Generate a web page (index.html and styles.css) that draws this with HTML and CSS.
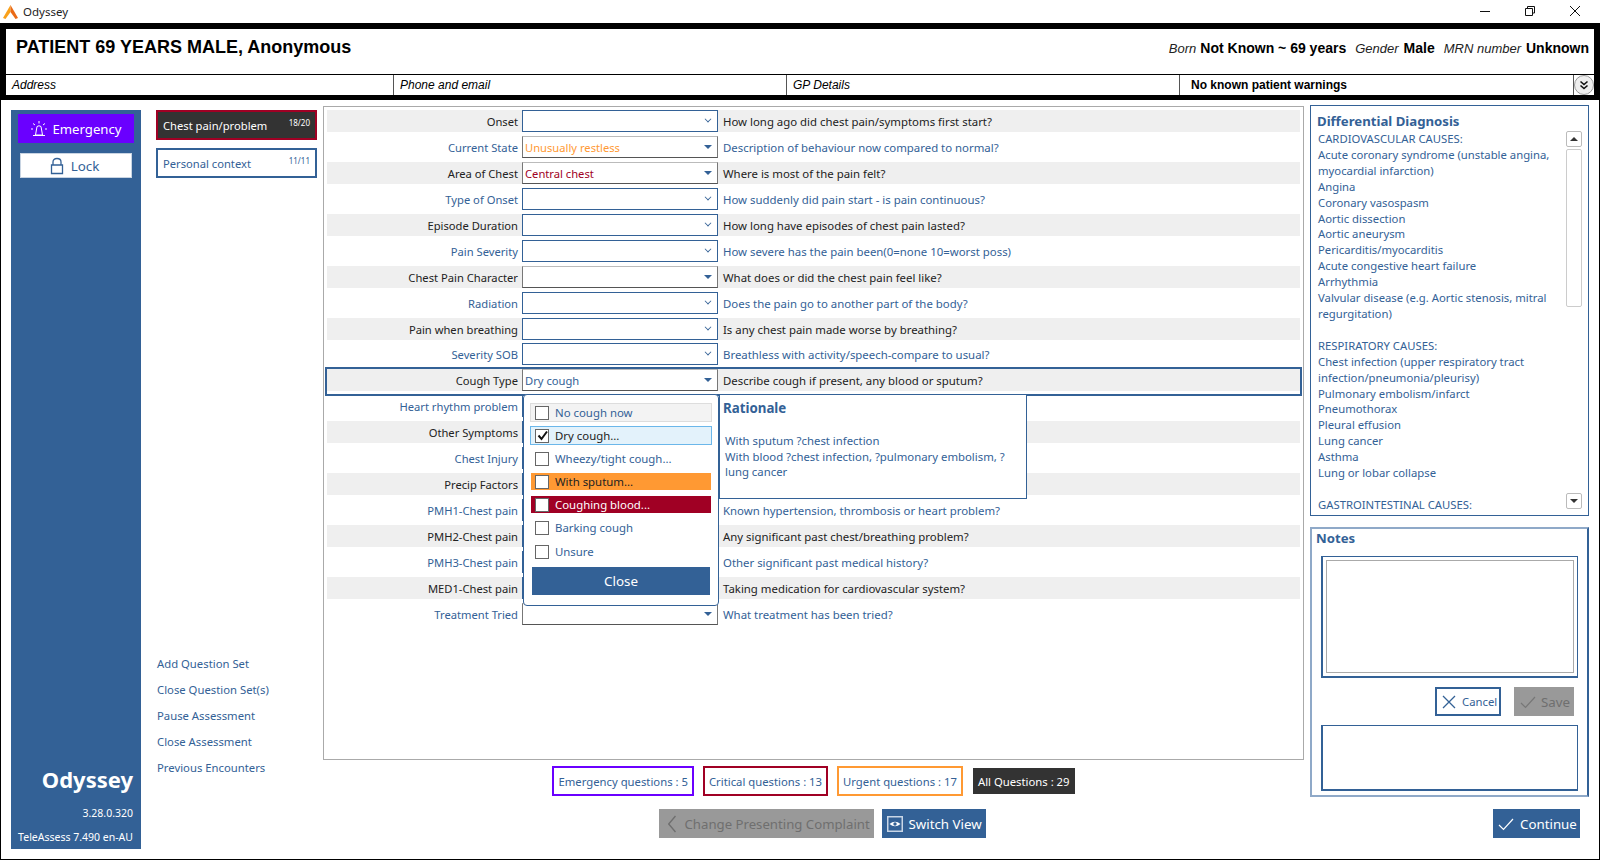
FILE: index.html
```html
<!DOCTYPE html>
<html lang="en">
<head>
<meta charset="utf-8">
<title>Odyssey</title>
<link rel="stylesheet" href="styles.css">
</head>
<body>
<div class="titlebar">
  <svg class="logo" width="15" height="14" viewBox="0 0 15 14"><path d="M7.5 0L0 13L2.5 14L7.5 7Z" fill="#f9a11b"/><path d="M7.5 0L15 13L12.5 14L7.5 7Z" fill="#ea6a17"/></svg>
  <span class="app-name">Odyssey</span>
  <div class="winctl">
    <svg width="12" height="12" viewBox="0 0 12 12"><path d="M1 6.5H11" stroke="#111" fill="none"/></svg>
    <svg width="12" height="12" viewBox="0 0 12 12"><path d="M3.5 3V1.5H10.5V8H8.5M1.5 3.5H8.5V10.5H1.5Z" stroke="#111" fill="none"/></svg>
    <svg width="12" height="12" viewBox="0 0 12 12"><path d="M1 1L11 11M11 1L1 11" stroke="#111" fill="none"/></svg>
  </div>
</div>
<header class="patient">
  <div class="patient-top">
    <h1>PATIENT 69 YEARS MALE, Anonymous</h1>
    <div class="demog"><i class="born">Born</i><b>Not Known ~ 69 years</b><i>Gender</i><b>Male</b><i>MRN number</i><b>Unknown</b></div>
  </div>
  <div class="patient-bottom">
    <div class="pcell c1"><i>Address</i></div>
    <div class="pcell c2"><i>Phone and email</i></div>
    <div class="pcell c3"><i>GP Details</i></div>
    <div class="pcell c4"><b>No known patient warnings</b></div>
    <div class="chev"><svg width="14" height="14" viewBox="0 0 14 14"><path d="M3.5 3.5L7 6.5L10.5 3.5M3.5 7.5L7 10.5L10.5 7.5" stroke="#111" stroke-width="1.6" fill="none"/></svg></div>
  </div>
</header>
<div class="workspace">
  <aside class="sidebar">
    <button class="emergency"><svg width="18" height="18" viewBox="0 0 18 18"><path d="M5.5 15L7 6.5Q9 5 11 6.5L12.5 15ZM3 15.5H15M9 1V3.5M3 3.5L5 5M15 3.5L13 5M1 9H3M15 9H17" stroke="#fff" fill="none"/></svg>Emergency</button>
    <button class="lock"><svg width="14" height="18" viewBox="0 0 14 18"><path d="M3 8V5Q3 1.5 7 1.5T11 5V8M1.5 8H12.5V16.5H1.5Z" stroke="#336196" stroke-width="1.3" fill="none"/></svg>Lock</button>
    <div class="brand">
      <div class="brand-name">Odyssey</div>
      <div class="brand-ver">3.28.0.320</div>
      <div class="brand-ver">TeleAssess 7.490 en-AU</div>
    </div>
  </aside>
  <nav class="tabs">
    <div class="tab tab-active"><span>Chest pain/problem</span><small>18/20</small></div>
    <div class="tab"><span>Personal context</span><small>11/11</small></div>
    <ul class="links">
      <li>Add Question Set</li>
      <li>Close Question Set(s)</li>
      <li>Pause Assessment</li>
      <li>Close Assessment</li>
      <li>Previous Encounters</li>
    </ul>
  </nav>
  <section class="center">
    <div class="qpanel">
      <div class="q q-g"><label>Onset</label><div class="sel"></div><p>How long ago did chest pain/symptoms first start?</p></div>
      <div class="q"><label>Current State</label><div class="sel grey-b val-or">Unusually restless</div><p>Description of behaviour now compared to normal?</p></div>
      <div class="q q-g"><label>Area of Chest</label><div class="sel grey-b val-red">Central chest</div><p>Where is most of the pain felt?</p></div>
      <div class="q"><label>Type of Onset</label><div class="sel"></div><p>How suddenly did pain start - is pain continuous?</p></div>
      <div class="q q-g"><label>Episode Duration</label><div class="sel"></div><p>How long have episodes of chest pain lasted?</p></div>
      <div class="q"><label>Pain Severity</label><div class="sel"></div><p>How severe has the pain been(0=none 10=worst poss)</p></div>
      <div class="q q-g"><label>Chest Pain Character</label><div class="sel grey-b"></div><p>What does or did the chest pain feel like?</p></div>
      <div class="q"><label>Radiation</label><div class="sel"></div><p>Does the pain go to another part of the body?</p></div>
      <div class="q q-g"><label>Pain when breathing</label><div class="sel"></div><p>Is any chest pain made worse by breathing?</p></div>
      <div class="q"><label>Severity SOB</label><div class="sel"></div><p>Breathless with activity/speech-compare to usual?</p></div>
      <div class="q q-g q-focus"><label>Cough Type</label><div class="sel grey-b val-blue">Dry cough</div><p>Describe cough if present, any blood or sputum?</p></div>
      <div class="q"><label>Heart rhythm problem</label><div class="sel"></div><p></p></div>
      <div class="q q-g"><label>Other Symptoms</label><div class="sel"></div><p></p></div>
      <div class="q"><label>Chest Injury</label><div class="sel"></div><p></p></div>
      <div class="q q-g"><label>Precip Factors</label><div class="sel"></div><p></p></div>
      <div class="q"><label>PMH1-Chest pain</label><div class="sel"></div><p>Known hypertension, thrombosis or heart problem?</p></div>
      <div class="q q-g"><label>PMH2-Chest pain</label><div class="sel"></div><p>Any significant past chest/breathing problem?</p></div>
      <div class="q"><label>PMH3-Chest pain</label><div class="sel"></div><p>Other significant past medical history?</p></div>
      <div class="q q-g"><label>MED1-Chest pain</label><div class="sel"></div><p>Taking medication for cardiovascular system?</p></div>
      <div class="q"><label>Treatment Tried</label><div class="sel grey-b"></div><p>What treatment has been tried?</p></div>

      <div class="popup">
        <div class="opt opt-hover"><span class="cb"></span>No cough now</div>
        <div class="opt opt-sel"><span class="cb"><svg width="13" height="13" viewBox="0 0 13 13"><path d="M2.5 6.5L5.5 10L11 2.5" stroke="#111" stroke-width="2" fill="none"/></svg></span>Dry cough...</div>
        <div class="opt"><span class="cb"></span>Wheezy/tight cough...</div>
        <div class="opt opt-or"><span class="cb"></span>With sputum...</div>
        <div class="opt opt-red"><span class="cb"></span>Coughing blood...</div>
        <div class="opt"><span class="cb"></span>Barking cough</div>
        <div class="opt opt-last"><span class="cb"></span>Unsure</div>
        <button class="close">Close</button>
      </div>
      <div class="rationale">
        <h3>Rationale</h3>
        <p>With sputum ?chest infection<br>With blood ?chest infection, ?pulmonary embolism, ?<br>lung cancer</p>
      </div>
    </div>
    <div class="counts">
      <span class="cnt c-em">Emergency questions : 5</span>
      <span class="cnt c-cr">Critical questions : 13</span>
      <span class="cnt c-ur">Urgent questions : 17</span>
      <span class="cnt c-all">All Questions : 29</span>
    </div>
    <div class="actions">
      <button class="btn btn-off"><svg width="8" height="18" viewBox="0 0 8 18"><path d="M7.5 1L0.7 9L7.5 17" stroke="#6f6f6f" stroke-width="1.4" fill="none"/></svg>Change Presenting Complaint</button>
      <button class="btn btn-on btn-switch"><svg width="16" height="16" viewBox="0 0 16 16"><rect x="0.75" y="0.75" width="14.5" height="14.5" fill="none" stroke="#c9d6e6" stroke-width="1.5"/><path d="M2.5 8Q8 3.5 13.5 8Q8 12.5 2.5 8Z" fill="#fff"/><circle cx="8" cy="8" r="1.7" fill="#336196"/></svg>Switch View</button>
    </div>
  </section>
  <aside class="right">
    <div class="ddx">
      <h2>Differential Diagnosis</h2>
      <div class="ddx-body">
        <div class="ddx-text">CARDIOVASCULAR CAUSES:<br>Acute coronary syndrome (unstable angina, myocardial infarction)<br>Angina<br>Coronary vasospasm<br>Aortic dissection<br>Aortic aneurysm<br>Pericarditis/myocarditis<br>Acute congestive heart failure<br>Arrhythmia<br>Valvular disease (e.g. Aortic stenosis, mitral regurgitation)<br><br>RESPIRATORY CAUSES:<br>Chest infection (upper respiratory tract infection/pneumonia/pleurisy)<br>Pulmonary embolism/infarct<br>Pneumothorax<br>Pleural effusion<br>Lung cancer<br>Asthma<br>Lung or lobar collapse<br><br>GASTROINTESTINAL CAUSES:</div>
        <div class="scroll">
          <div class="sbtn"><i class="up"></i></div>
          <div class="strack"></div>
          <div class="sbtn sdown"><i class="down"></i></div>
        </div>
      </div>
    </div>
    <div class="notes">
      <h2>Notes</h2>
      <div class="note-outer"><div class="note-inner"></div></div>
      <div class="note-btns">
        <button class="nbtn n-cancel"><svg width="14" height="14" viewBox="0 0 14 14"><path d="M1 1L13 13M13 1L1 13" stroke="#336196" stroke-width="1.3" fill="none"/></svg>Cancel</button>
        <button class="nbtn n-save"><svg width="16" height="14" viewBox="0 0 16 14"><path d="M1 8L5.5 12.5L15 2" stroke="#777" stroke-width="1.2" fill="none"/></svg>Save</button>
      </div>
      <div class="note-log"></div>
    </div>
    <div class="continue-row">
      <button class="btn btn-on btn-cont"><svg width="16" height="14" viewBox="0 0 16 14"><path d="M1 8L5.5 12.5L15 2" stroke="#fff" stroke-width="1.2" fill="none"/></svg>Continue</button>
    </div>
  </aside>
</div>
</body>
</html>
```
FILE: styles.css
```css
* { box-sizing: border-box; }
html, body { margin: 0; height: 100%; }
body {
  width: 1600px; height: 860px; overflow: hidden; background: #fff;
  font-family: "Noto Sans", "Open Sans", sans-serif; font-size: 11.4px; color: #336196;
  display: flex; flex-direction: column;
}
button { font-family: inherit; border: 0; padding: 0; }
h1, h2, h3, p, ul { margin: 0; padding: 0; }
svg { flex: none; }

.titlebar { height: 23px; display: flex; align-items: center; padding-left: 3px; color: #222; }
.logo { margin-right: 5px; }
.app-name { font-size: 11.5px; }
.winctl { margin-left: auto; display: flex; gap: 33px; padding: 0 19px 2px 0; }

.patient { height: 77px; background: #000; padding: 6px 6px 5px; display: flex; flex-direction: column; font-family: "Liberation Sans", Arial, sans-serif; color: #000; }
.patient-top { height: 45px; background: #fff; display: flex; justify-content: space-between; padding: 7px 5px 0 10px; }
.patient-top h1 { font-size: 18px; line-height: 22px; font-weight: bold; }
.demog { font-size: 14px; padding-top: 4px; display: flex; align-items: baseline; }
.demog i { font-size: 13px; color: #222; margin-right: 5px; }
.demog .born { margin-right: 4px; }
.demog b { margin-right: 9px; }
.demog b:last-child { margin-right: 0; }
.patient-bottom { flex: 1; margin-top: 1px; background: #fff; display: flex; font-size: 12px; }
.pcell { display: flex; align-items: center; padding-left: 6px; border-right: 1px solid #555; }
.c1 { width: 388px; }
.c2 { width: 393px; }
.c3 { width: 393px; }
.c4 { flex: 1; padding-left: 11px; }
.chev { width: 20px; display: flex; align-items: center; justify-content: center; background: #eee; border-radius: 50%; border: 1px solid #999; }

.workspace { flex: 1; min-height: 0; display: flex; border: 1px solid #000; border-top: 0; position: relative; }
.sidebar { width: 130px; margin: 10px 0 10px 10px; background: #336196; display: flex; flex-direction: column; align-items: center; padding-top: 4px; }
.emergency { width: 116px; height: 29px; background: #6a00ff; color: #fff; font-size: 13.2px; display: flex; align-items: center; justify-content: center; gap: 4px; }
.lock { width: 112px; height: 25px; margin-top: 10px; background: #fff; color: #336196; font-size: 13.4px; border: 1px solid #c8d4e2; padding-right: 3px; display: flex; align-items: center; justify-content: center; gap: 7px; }
.brand { margin-top: auto; align-self: stretch; padding-right: 8px; text-align: right; color: #fff; white-space: nowrap; }
.brand-name { font-size: 22px; font-weight: bold; line-height: 30px; margin-bottom: 7px; }
.brand-ver { font-size: 10.5px; line-height: 24px; }

.tabs { width: 161px; margin: 10px 0 0 15px; display: flex; flex-direction: column; gap: 8px; font-size: 11.2px; }
.tab { height: 30px; border: 2px solid #336196; display: flex; justify-content: space-between; padding: 0 5px; color: #336196; align-items: center; }
.tab small { font-size: 8px; align-self: flex-start; padding-top: 5px; }
.tab-active { background: #333; border-color: #a00024; color: #fff; }
.links { list-style: none; margin-top: 468px; display: flex; flex-direction: column; gap: 6px; padding-left: 1px; font-size: 11.3px; }
.links li { line-height: 20px; }

.center { width: 981px; margin-left: 6px; display: flex; flex-direction: column; align-items: stretch; }
.qpanel { height: 654px; margin-top: 6px; border: 1px solid #aaa; padding: 3px 3px 0 3px; position: relative; }
.q { height: 25.95px; display: flex; align-items: flex-start; color: #336196; position: relative; }
.q-g { color: #222; background: linear-gradient(#efefef, #efefef) no-repeat top / 100% 22px; }
.q label { width: 195px; text-align: right; padding-right: 4px; line-height: 23px; flex: none; font-size: 11.2px; }
.sel { width: 196px; height: 22px; border: 1px solid #336196; background: #fff; line-height: 21px; padding-left: 2px; position: relative; flex: none; font-size: 11.2px; }
.sel::after { content: ""; position: absolute; right: 6px; top: 5px; width: 5px; height: 5px; border: solid #336196; border-width: 0 1px 1px 0; transform: rotate(45deg) scale(0.8); }
.grey-b { border-color: #bbb #777 #555 #777; }
.grey-b::after { right: 5px; top: 8px; width: 0; height: 0; border-style: solid; border-width: 4px 4px 0; border-color: #336196 transparent transparent; transform: none; }
.val-or { color: #ff9933; }
.val-red { color: #a00024; }
.val-blue { color: #336196; }
.q p { padding-left: 5px; line-height: 23px; white-space: nowrap; }
.q-focus::before { content: ""; position: absolute; left: -2px; right: -2px; top: -2px; height: 25px; border: 2px solid #336196; pointer-events: none; }

.popup { position: absolute; left: 199px; top: 287px; width: 196px; height: 212px; background: #fff; border: 1px solid #336196; border-radius: 4px; padding: 8px 6px 0 6px; z-index: 2; display: flex; flex-direction: column; gap: 4px; align-items: stretch; }
.opt { height: 19px; display: flex; align-items: center; gap: 6px; padding-left: 5px; color: #336196; flex: none; }
.opt-last { margin-top: 1px; }
.cb { width: 14px; height: 14px; border: 1px solid #666; background: #fff; flex: none; display: flex; align-items: center; justify-content: center; }
.opt-hover { background: #f3f3f3; border: 1px solid #ddd; padding-left: 4px; }
.opt-sel { background: #e3f2fb; border: 1px solid #6bb7ea; color: #222; padding-left: 4px; }
.opt-or { background: #ff9933; color: #222; height: 17px; margin: 1px 1px; padding-left: 4px; }
.opt-red { background: #a00024; color: #fff; height: 17px; margin: 1px 1px; padding-left: 4px; }
.close { height: 28px; background: #336196; color: #fff; font-size: 13.4px; margin: 2px 2px 0; flex: none; }
.rationale { position: absolute; left: 395px; top: 287px; width: 308px; height: 105px; background: #fff; border: 1px solid #336196; padding: 3px 5px; z-index: 2; }
.rationale h3 { font-size: 13.3px; line-height: 20px; font-weight: bold; margin-left: -2px; }
.rationale p { margin-top: 15px; line-height: 15.5px; font-size: 11.35px; }

.counts { display: flex; justify-content: center; align-items: center; gap: 9px; margin-top: 6px; font-size: 11.3px; white-space: nowrap; }
.cnt { height: 30px; border: 2px solid; padding: 0 4px; display: flex; align-items: center; }
.c-em { border-color: #6a00ff; }
.c-cr { border-color: #a00024; }
.c-ur { border-color: #ff9933; }
.c-all { background: #333; color: #fff; border: 0; height: 26px; margin-left: 1px; padding: 0 5px; }
.actions { display: flex; justify-content: center; gap: 8px; margin-top: 13px; padding-left: 17px; }
.btn { height: 29px; display: flex; align-items: center; font-size: 13.3px; white-space: nowrap; }
.btn-off { width: 215px; background: #999; color: #6f6f6f; font-size: 13.2px; padding: 0 4px 0 9px; gap: 9px; }
.btn-on { background: #336196; color: #fff; }
.btn-switch { width: 104px; padding: 0 5px; gap: 6px; }

.right { width: 279px; margin-left: 6px; display: flex; flex-direction: column; }
.right h2 { font-size: 13.2px; font-weight: bold; line-height: 20px; }
.ddx { height: 411px; margin-top: 5px; border: 1px solid #336196; padding: 5px 6px 0; display: flex; flex-direction: column; overflow: hidden; }
.ddx-body { position: relative; flex: 1; min-height: 0; overflow: hidden; }
.ddx-text { width: 240px; padding-left: 1px; line-height: 15.91px; font-size: 11.3px; }
.scroll { position: absolute; right: 0; top: 0; width: 16px; height: 378px; display: flex; flex-direction: column; }
.sbtn { height: 16px; background: #fff; border: 1px solid #bbb; border-radius: 2px; display: flex; align-items: center; justify-content: center; flex: none; }
.strack { height: 158px; margin-top: 2px; border: 1px solid #ccc; border-radius: 2px; }
.sdown { margin-top: auto; }
.up { border: 4px solid transparent; border-bottom: 4px solid #333; border-top: 0; }
.down { border: 4px solid transparent; border-top: 4px solid #333; border-bottom: 0; }
.notes { height: 270px; margin-top: 11px; border: 2px solid #336196; border-color: #8fa9c8 #336196 #8fa9c8 #8fa9c8; padding: 0 9px; }
.notes h2 { margin-left: -5px; margin-bottom: 9px; line-height: 18px; }
.note-outer { height: 122px; border: 2px solid #336196; border-width: 1px 1px 2px 2px; padding: 3px; }
.note-inner { height: 100%; border: 1px solid #aaa; }
.note-btns { display: flex; justify-content: flex-end; gap: 13px; margin-top: 9px; padding-right: 4px; }
.nbtn { height: 29px; display: flex; align-items: center; font-size: 11.3px; }
.n-cancel { width: 66px; border: 2px solid #336196; background: #fff; color: #336196; padding-left: 5px; gap: 6px; }
.n-save { width: 60px; background: #999; color: #6f6f6f; padding-left: 6px; gap: 5px; font-size: 13.3px; }
.note-log { height: 66px; margin-top: 9px; border: 1px solid #336196; border-width: 1px 1px 2px 2px; }
.continue-row { display: flex; justify-content: flex-end; margin-top: 12px; padding-right: 9px; }
.btn-cont { width: 87px; padding: 0 5px; gap: 6px; }
```
